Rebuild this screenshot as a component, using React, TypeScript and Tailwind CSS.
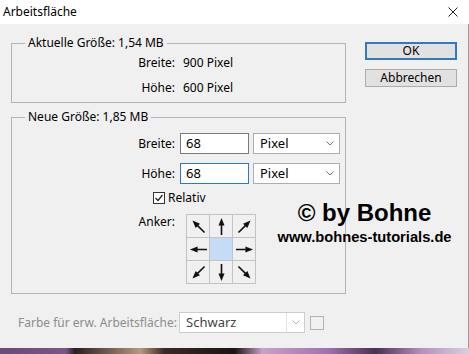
import type { ReactNode } from "react";

const arrowRotations: (string | null)[] = [
  "-rotate-45",
  "rotate-0",
  "rotate-45",
  "-rotate-90",
  null,
  "rotate-90",
  "rotate-[-135deg]",
  "rotate-180",
  "rotate-[135deg]",
];

function Arrow({ rotation }: { rotation: string }) {
  return (
    <svg viewBox="0 0 20 20" className={`h-[19px] w-[19px] ${rotation}`}>
      <line x1="10" y1="19" x2="10" y2="6" stroke="#111" strokeWidth="1.7" />
      <polygon points="10,1 6.8,9 13.2,9" fill="#111" />
    </svg>
  );
}

function Chevron({ color = "#777" }: { color?: string }) {
  return (
    <svg viewBox="0 0 8 5" className="h-[5px] w-[8px]">
      <polyline points="0.5,0.5 4,4 7.5,0.5" fill="none" stroke={color} strokeWidth="1" />
    </svg>
  );
}

function Group({ title, children, className }: { title: string; children: ReactNode; className?: string }) {
  return (
    <fieldset className={`border border-[#b4b4b4] ${className ?? ""}`}>
      <legend className="ml-[13px] px-[3px] leading-[16px]">{title}</legend>
      {children}
    </fieldset>
  );
}

function SizeRow({ label, focused }: { label: string; focused?: boolean }) {
  return (
    <div className="grid grid-cols-[163px_1fr] items-center gap-[5px]">
      <span className="text-right">{label}</span>
      <div className="flex items-center gap-[4px]">
        <div
          className={`flex h-[21px] w-[69px] items-center border bg-white pl-[5px] text-[13px] ${
            focused ? "border-[#2b79c2]" : "border-[#7a7a7a]"
          }`}
        >
          68
        </div>
        <div className="flex h-[21px] w-[87px] items-center justify-between border border-[#adadad] bg-white pl-[6px] pr-[5px] text-[13px]">
          <span>Pixel</span>
          <Chevron />
        </div>
      </div>
    </div>
  );
}

export default function App() {
  return (
    <div
      className="relative flex h-[354px] w-[469px] flex-col overflow-hidden bg-[#f0f0f0] text-[12px] text-black"
      style={{ fontFamily: '"Noto Sans", "Open Sans", sans-serif' }}
    >
      <div className="flex h-[24px] shrink-0 items-center justify-between bg-white pl-[3px] pr-[11px]">
        <span className="leading-[16px]">Arbeitsfläche</span>
        <svg viewBox="0 0 10 10" className="h-[10px] w-[10px]">
          <path d="M0.5 0.5 L9.5 9.5 M9.5 0.5 L0.5 9.5" stroke="#222" strokeWidth="1" />
        </svg>
      </div>

      <div className="flex flex-1 border-r border-[#9a9a9a]">
        <div className="flex w-[346px] flex-col pl-[11px] pt-[11px]">
          <Group title="Aktuelle Größe: 1,54 MB" className="pb-[6px]">
            <div className="mt-[4px] flex flex-col gap-[9px]">
              {[
                ["Breite:", "900 Pixel"],
                ["Höhe:", "600 Pixel"],
              ].map(([label, value]) => (
                <div key={label} className="grid h-[16px] grid-cols-[163px_1fr] items-center gap-[8px] leading-[16px]">
                  <span className="text-right">{label}</span>
                  <span>{value}</span>
                </div>
              ))}
            </div>
          </Group>

          <Group title="Neue Größe: 1,85 MB" className="mt-[6px] pb-[9px]">
            <div className="mt-[8px] flex flex-col gap-[9px]">
              <SizeRow label="Breite:" />
              <SizeRow label="Höhe:" focused />
            </div>

            <label className="ml-[141px] mt-[6px] flex h-[16px] items-center gap-[3px]">
              <span className="flex h-[12px] w-[12px] items-center justify-center border border-[#333] bg-white">
                <svg viewBox="0 0 10 10" className="h-[10px] w-[10px]">
                  <polyline points="1.5,5 4,7.5 8.5,2" fill="none" stroke="#222" strokeWidth="1.2" />
                </svg>
              </span>
              <span>Relativ</span>
            </label>

            <div className="mt-[8px] grid grid-cols-[163px_1fr] gap-[11px]">
              <span className="text-right leading-[16px]">Anker:</span>
              <div className="grid w-fit grid-cols-3 border-l border-t border-[#c3c3c3]">
                {arrowRotations.map((rotation, i) => (
                  <div
                    key={i}
                    className={`flex h-[23px] w-[23px] items-center justify-center border-b border-r border-[#c3c3c3] ${
                      rotation ? "" : "bg-[#c4dcf5]"
                    }`}
                  >
                    {rotation && <Arrow rotation={rotation} />}
                  </div>
                ))}
              </div>
            </div>
          </Group>

          <div className="ml-[7px] mt-[18px] flex items-center">
            <span className="w-[161px] text-[#8d8d8d]">Farbe für erw. Arbeitsfläche:</span>
            <div className="flex h-[21px] w-[126px] items-center border border-[#cdcdcd] bg-white text-[13px]">
              <span className="flex-1 pl-[6px] text-[#444]">Schwarz</span>
              <div className="flex h-full w-[18px] items-center justify-center border-l border-[#e2e2e2]">
                <Chevron color="#b5b5b5" />
              </div>
            </div>
            <div className="ml-[5px] h-[14px] w-[14px] border border-[#b3b3b3]" />
          </div>
        </div>

        <div className="ml-[19px] flex flex-col gap-[9px] pt-[18px]">
          <button className="h-[18px] w-[92px] border-2 border-[#2f7bbd] bg-[#e1e1e1] leading-[14px]">OK</button>
          <button className="h-[18px] w-[92px] border border-[#adadad] bg-[#e1e1e1] leading-[16px]">Abbrechen</button>
        </div>
      </div>

      <div className="h-[6px] shrink-0 bg-[linear-gradient(90deg,#6a4a78_0%,#7a5585_14%,#2a1f22_16%,#b8977e_30%,#3a2a26_35%,#1a1414_50%,#caa0c8_56%,#a070b0_70%,#4a3050_80%,#b890c0_90%,#d8d0dc_100%)]" />

      <div
        className="pointer-events-none absolute left-[264px] top-[201px] w-[201px] text-center font-bold"
        style={{ fontFamily: '"Liberation Sans", Arial, sans-serif' }}
      >
        <div className="text-[24px] leading-[24px]">© by Bohne</div>
        <div className="mt-[3px] text-[14.7px] leading-[18px]">www.bohnes-tutorials.de</div>
      </div>
    </div>
  );
}
